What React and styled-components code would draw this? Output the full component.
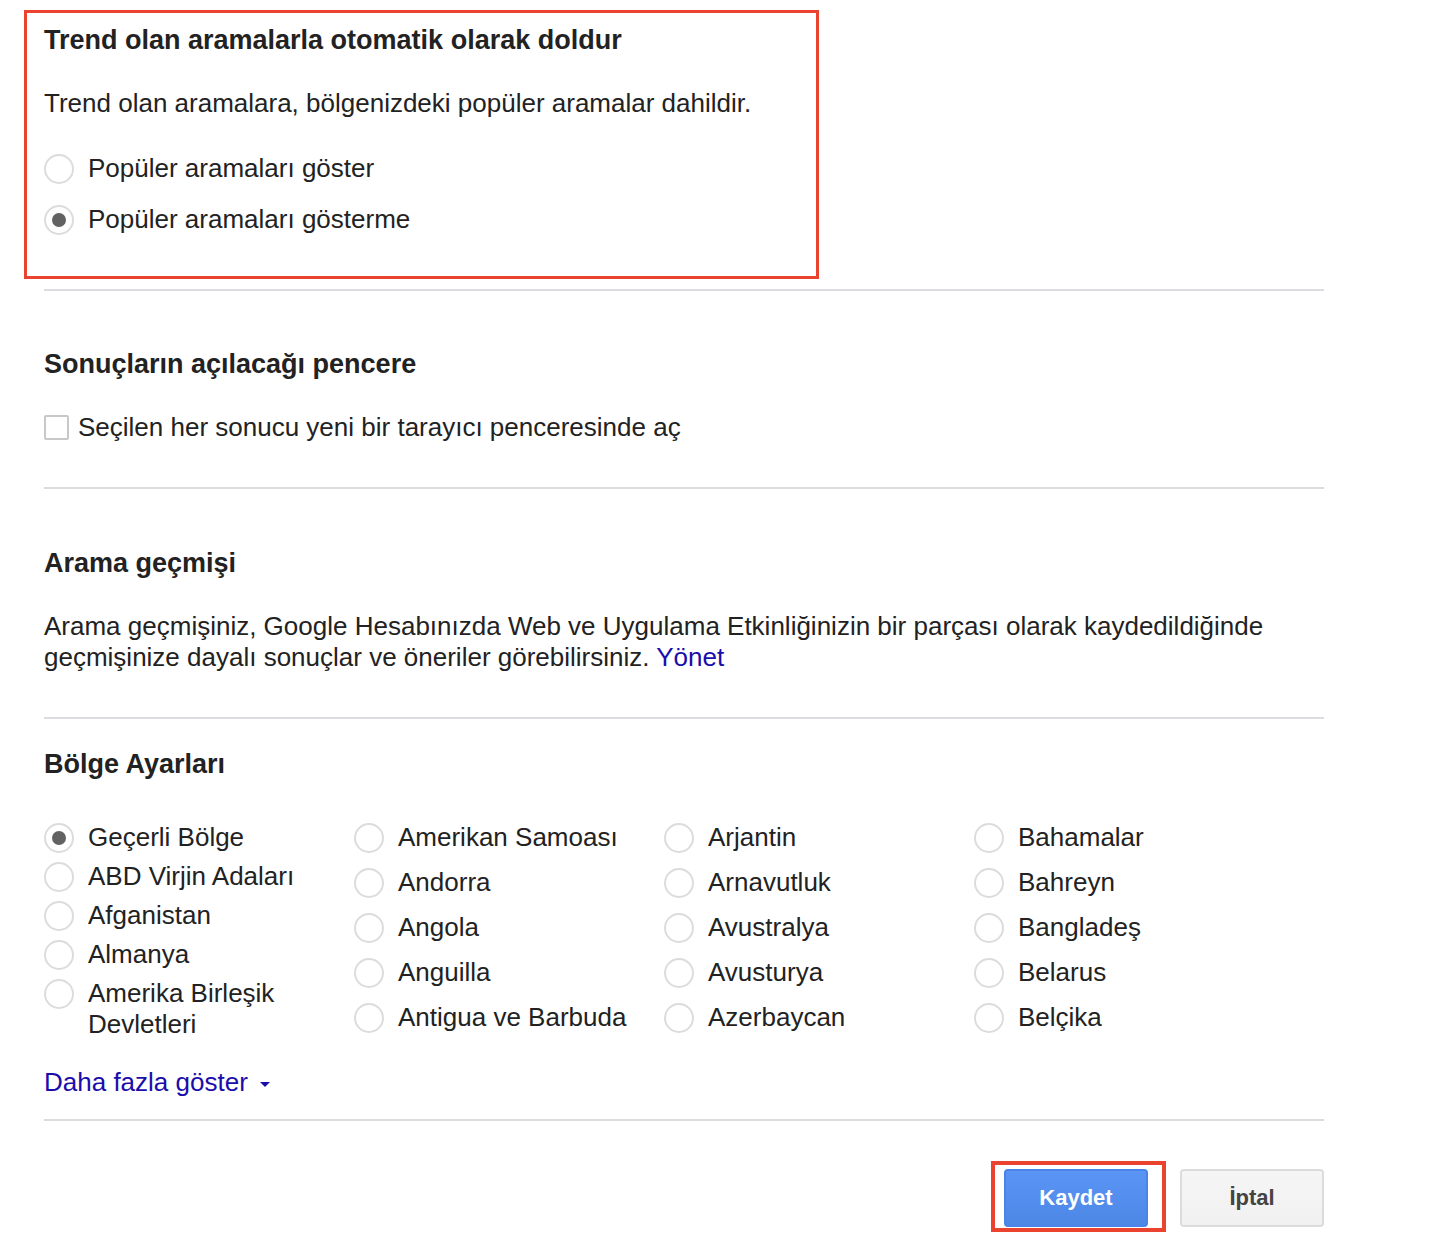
import React, { useState } from 'react';
import styled, { createGlobalStyle } from 'styled-components';

const GlobalStyle = createGlobalStyle`
  html, body {
    margin: 0;
    padding: 0;
    background: #fff;
  }
  body {
    font-family: "Liberation Sans", Arial, sans-serif;
    color: #222;
  }
`;

const Page = styled.div`
  width: 1280px;
  padding: 10px 0 30px 44px;
`;

const Highlight = styled.div`
  margin-left: -20px;
  width: 772px;
  padding: 12px 0 41px 17px;
  border: 3px solid #ea4330;
`;

const Section = styled.div`
  padding-top: ${p => p.top || 0}px;
  padding-bottom: ${p => p.bottom || 0}px;
`;

const Heading = styled.h2`
  margin: 0;
  font-size: 27px;
  font-weight: bold;
  line-height: 30px;
  color: #222;
`;

const Text = styled.p`
  margin: ${p => p.gap || 33}px 0 0;
  font-size: 26px;
  line-height: 31px;
  color: #222;
`;

const Divider = styled.hr`
  margin: ${p => p.top || 0}px 0 0;
  border: 0;
  height: 2px;
  background: #dadce0;
`;

const Link = styled.a`
  color: #1a0dab;
  text-decoration: none;
  cursor: pointer;
`;

const OptionList = styled.div`
  display: flex;
  flex-direction: column;
  gap: ${p => p.gap}px;
  margin-top: ${p => p.top || 0}px;
`;

const Option = styled.label`
  display: flex;
  align-items: flex-start;
  gap: 14px;
  font-size: 26px;
  line-height: 31px;
  color: #222;
  cursor: pointer;
  padding-right: 16px;
`;

const Radio = styled.span`
  flex: none;
  box-sizing: border-box;
  width: 30px;
  height: 30px;
  margin-top: 1px;
  border-radius: 50%;
  border: 2px solid #dcdcdf;
  background: #fff;
  display: flex;
  align-items: center;
  justify-content: center;

  &::after {
    content: '';
    width: 14px;
    height: 14px;
    border-radius: 50%;
    background: ${p => (p.checked ? '#626262' : 'transparent')};
  }
`;

const Checkbox = styled.span`
  flex: none;
  box-sizing: border-box;
  width: 25px;
  height: 25px;
  margin-top: 3px;
  border: 2px solid #c8c8c8;
  border-radius: 2px;
  background: #fff;
`;

const CheckRow = styled(Option)`
  gap: 9px;
  margin-top: 33px;
`;

const RegionGrid = styled.div`
  display: grid;
  grid-template-columns: repeat(4, 310px);
  margin-top: 43px;
  align-items: start;
`;

const MoreLink = styled(Link)`
  display: inline-flex;
  align-items: center;
  gap: 12px;
  margin-top: 27px;
  font-size: 26px;
  line-height: 31px;
`;

const Caret = styled.span`
  width: 0;
  height: 0;
  border-left: 5px solid transparent;
  border-right: 5px solid transparent;
  border-top: 5px solid #1a0dab;
  margin-top: 4px;
`;

const Actions = styled.div`
  display: flex;
  justify-content: flex-end;
  align-items: flex-start;
  gap: 14px;
  margin-top: 40px;
`;

const ButtonMark = styled.div`
  border: 4px solid #ea4330;
  padding: 4px 14px 1px 9px;
`;

const Button = styled.button`
  box-sizing: border-box;
  width: 144px;
  height: 58px;
  border-radius: 4px;
  font-family: "Liberation Sans", Arial, sans-serif;
  font-size: 22px;
  font-weight: bold;
  cursor: pointer;
  color: ${p => (p.primary ? '#fff' : '#444')};
  border: 2px solid ${p => (p.primary ? '#4a84e6' : '#dcdcdc')};
  background: ${p =>
    p.primary
      ? 'linear-gradient(#5a95f5, #4d87e6)'
      : 'linear-gradient(#f5f5f5, #f1f1f1)'};
  margin-top: ${p => (p.primary ? 0 : 8)}px;
`;

const regions = [
  [
    'Geçerli Bölge',
    'ABD Virjin Adaları',
    'Afganistan',
    'Almanya',
    'Amerika Birleşik Devletleri',
  ],
  ['Amerikan Samoası', 'Andorra', 'Angola', 'Anguilla', 'Antigua ve Barbuda'],
  ['Arjantin', 'Arnavutluk', 'Avustralya', 'Avusturya', 'Azerbaycan'],
  ['Bahamalar', 'Bahreyn', 'Bangladeş', 'Belarus', 'Belçika'],
];

function App() {
  const [trending, setTrending] = useState('hide');
  const [newWindow, setNewWindow] = useState(false);
  const [region, setRegion] = useState('Geçerli Bölge');

  return (
    <Page>
      <GlobalStyle />
      <Highlight>
        <Heading>Trend olan aramalarla otomatik olarak doldur</Heading>
        <Text>Trend olan aramalara, bölgenizdeki popüler aramalar dahildir.</Text>
        <OptionList gap={20} top={34}>
          <Option onClick={() => setTrending('show')}>
            <Radio checked={trending === 'show'} />
            Popüler aramaları göster
          </Option>
          <Option onClick={() => setTrending('hide')}>
            <Radio checked={trending === 'hide'} />
            Popüler aramaları gösterme
          </Option>
        </OptionList>
      </Highlight>
      <Divider top={10} />

      <Section top={58}>
        <Heading>Sonuçların açılacağı pencere</Heading>
        <CheckRow onClick={() => setNewWindow(!newWindow)}>
          <Checkbox />
          Seçilen her sonucu yeni bir tarayıcı penceresinde aç
        </CheckRow>
      </Section>
      <Divider top={44} />

      <Section top={59}>
        <Heading>Arama geçmişi</Heading>
        <Text>
          Arama geçmişiniz, Google Hesabınızda Web ve Uygulama Etkinliğinizin bir
          parçası olarak kaydedildiğinde geçmişinize dayalı sonuçlar ve öneriler
          görebilirsiniz. <Link>Yönet</Link>
        </Text>
      </Section>
      <Divider top={44} />

      <Section top={30}>
        <Heading>Bölge Ayarları</Heading>
        <RegionGrid>
          {regions.map((col, i) => (
            <OptionList key={i} gap={i === 0 ? 8 : 14}>
              {col.map(name => (
                <Option key={name} onClick={() => setRegion(name)}>
                  <Radio checked={region === name} />
                  {name}
                </Option>
              ))}
            </OptionList>
          ))}
        </RegionGrid>
        <MoreLink>
          Daha fazla göster <Caret />
        </MoreLink>
      </Section>
      <Divider top={21} />

      <Actions>
        <ButtonMark>
          <Button primary>Kaydet</Button>
        </ButtonMark>
        <Button>İptal</Button>
      </Actions>
    </Page>
  );
}

export default App;
